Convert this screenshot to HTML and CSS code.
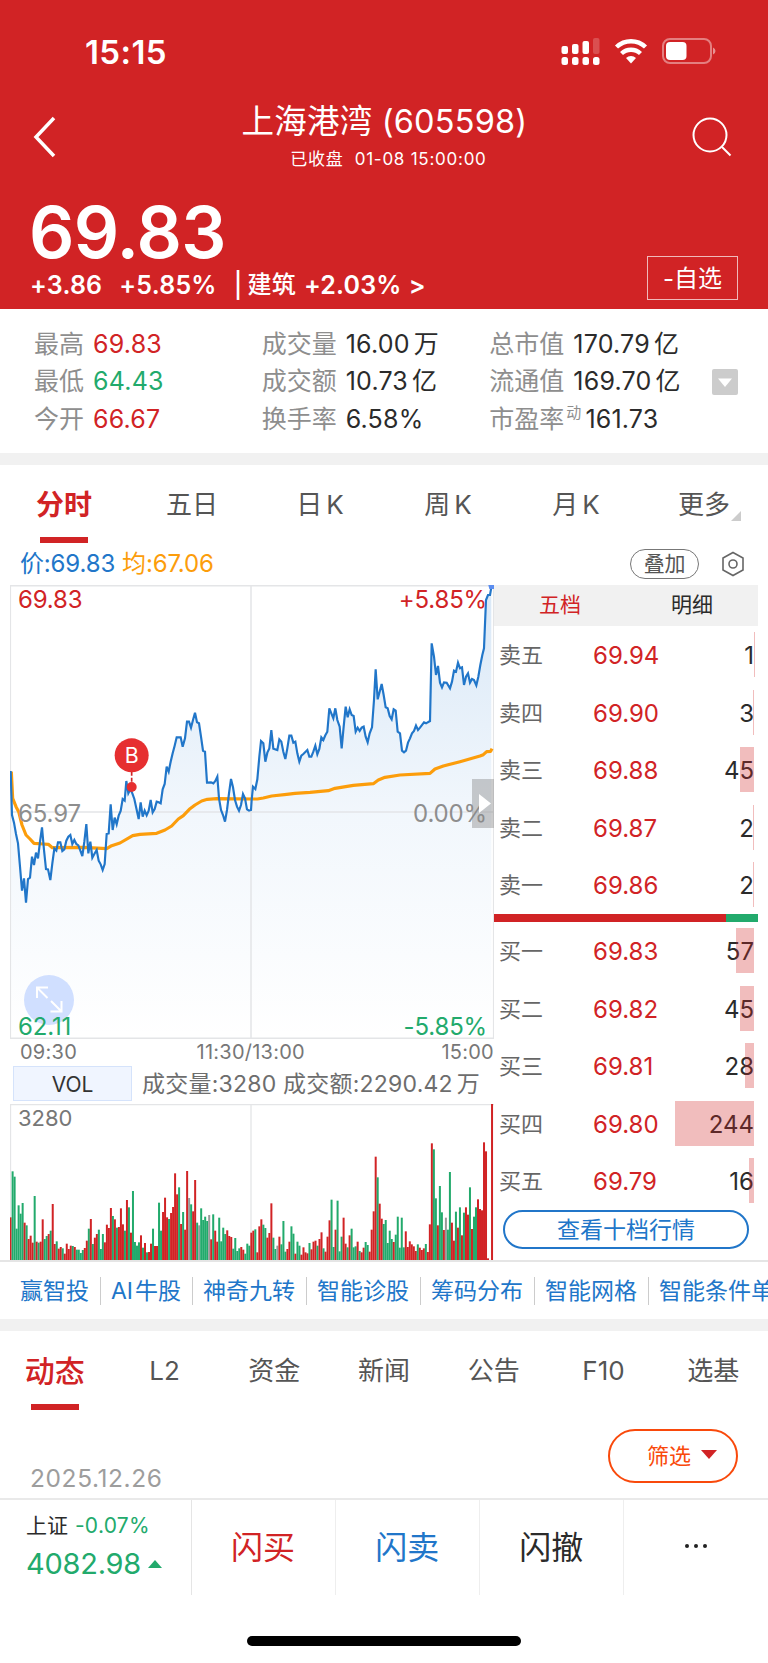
FILE: index.html
```html
<!DOCTYPE html>
<html lang="zh-CN">
<head>
    <meta charset="UTF-8">
    <meta name="viewport" content="width=device-width, initial-scale=1.0">
    <title>上海港湾 (605598)</title>
    <link rel="stylesheet" href="styles.css">
</head>
<body>
    <div class="header">
        <div class="status-bar">
            <span class="clock">15:15</span>
            <svg class="status-icons" width="156" height="30" viewBox="0 0 156 30">
                <g fill="#fff">
                    <rect x="1.500" y="10" width="6.500" height="8" rx="2"/>
                    <rect x="12" y="8" width="6.500" height="10" rx="2"/>
                    <rect x="22.500" y="5" width="6.500" height="13" rx="2"/>
                    <rect x="33" y="2" width="6.500" height="16" rx="2" opacity=".2"/>
                    <rect x="1.500" y="21" width="6.500" height="8" rx="2.500"/>
                    <rect x="12" y="21" width="6.500" height="8" rx="2.500"/>
                    <rect x="22.500" y="21" width="6.500" height="8" rx="2.500"/>
                    <rect x="33" y="21" width="6.500" height="8" rx="2.500"/>
                    <path d="M71 27.500l-5-5.500a7.500 7.500 0 0 1 10 0z"/>
                    <rect x="106" y="6" width="20.500" height="18" rx="4"/>
                    <path d="M153 11.500v7q2.500-1 2.500-3.500t-2.500-3.500z" opacity=".5"/>
                </g>
                <g fill="none" stroke="#fff" stroke-width="4.400">
                    <path d="M56.500 11a21 21 0 0 1 29 0"/>
                    <path d="M61.500 17.500a14 14 0 0 1 19 0"/>
                </g>
                <rect x="103" y="3" width="48" height="24" rx="7" fill="none" stroke="#fff" stroke-width="2" opacity=".42"/>
            </svg>
        </div>
        <div class="nav">
            <svg width="24" height="42" viewBox="0 0 24 42"><path d="M22 2L4 21l18 19" fill="none" stroke="#fff" stroke-width="3.500"/></svg>
            <div class="nav-title">
                <h1>上海港湾 (605598)</h1>
                <p>已收盘&nbsp; 01-08 15:00:00</p>
            </div>
            <svg width="42" height="42" viewBox="0 0 42 42" fill="none" stroke="#fff" stroke-width="2"><circle cx="19" cy="19" r="16.500"/><path d="M31 31l8.500 8.500"/></svg>
        </div>
        <div class="price">69.83</div>
        <div class="change-row">
            <div class="change"><span>+3.86</span><span>+5.85%</span><span>|</span><span>建筑</span><span>+2.03%</span><span>&gt;</span></div>
            <div class="fav">-自选</div>
        </div>
    </div>

    <div class="stats">
        <div class="stat-col">
            <div><label>最高</label><b class="red">69.83</b></div>
            <div><label>最低</label><b class="green">64.43</b></div>
            <div><label>今开</label><b class="red">66.67</b></div>
        </div>
        <div class="stat-col">
            <div><label>成交量</label><b>16.00<i>万</i></b></div>
            <div><label>成交额</label><b>10.73<i>亿</i></b></div>
            <div><label>换手率</label><b>6.58%</b></div>
        </div>
        <div class="stat-col">
            <div><label>总市值</label><b>170.79<i>亿</i></b></div>
            <div><label>流通值</label><b>169.70<i>亿</i></b></div>
            <div class="pe"><label>市盈率<small>动</small></label><b>161.73</b></div>
        </div>
        <svg width="26" height="26" viewBox="0 0 26 26"><rect width="26" height="26" rx="2" fill="#ccc"/><path d="M6 9.500h14l-7 8.500z" fill="#fff"/></svg>
    </div>

    <div class="tabs">
        <div class="tab active">分时</div>
        <div class="tab">五日</div>
        <div class="tab">日<i>K</i></div>
        <div class="tab">周<i>K</i></div>
        <div class="tab">月<i>K</i></div>
        <div class="tab more">更多</div>
    </div>

    <div class="legend">
        <span class="blue">价:69.83</span>
        <span class="orange">均:67.06</span>
        <span class="overlay-btn">叠加</span>
        <svg width="24" height="26" viewBox="0 0 24 26" fill="none" stroke="#666" stroke-width="1.600"><path d="M12 1.500l10 5.500v12l-10 5.500L2 19V7z"/><circle cx="12" cy="13" r="4"/></svg>
    </div>

    <div class="quote">
        <div class="charts">
            <div class="price-chart">
                <svg width="484" height="454" viewBox="30 15 1452 1362">
                    <defs>
                        <linearGradient id="fade" x1="0" y1="0" x2="0" y2="1">
                            <stop offset="0" stop-color="#1f77cf" stop-opacity=".17"/>
                            <stop offset=".5" stop-color="#1f77cf" stop-opacity=".06"/>
                            <stop offset="1" stop-color="#1f77cf" stop-opacity="0"/>
                        </linearGradient>
                    </defs>
                    <path id="area" fill="url(#fade)"/>
                    <path d="M31 17H1481V1375H31zM753 17V1375M31 696H1481" fill="none" stroke="#e4e5e7" stroke-width="4.500"/>
                    <polyline id="average" fill="none" stroke="#fc9d0b" stroke-width="9.500" stroke-linejoin="round"/>
                    <polyline id="line" fill="none" stroke="#2176c9" stroke-width="6.500"/>
                    <path d="M1465 15h17v12h-14z" fill="#5b8def"/>
                    <path d="M395 575v36" stroke="#d12325" stroke-width="5" stroke-dasharray="12 6"/>
                    <circle cx="395" cy="526" r="51" fill="#e62f30"/>
                    <circle cx="395" cy="621" r="15" fill="#e62f30"/>
                    <text x="395" y="549" class="marker">B</text>
                </svg>
                <svg class="expand" width="50" height="50" viewBox="0 0 50 50"><circle cx="25" cy="25" r="25" fill="#d0dfff"/><path d="M13 23V12.500h11M13.500 13l10 10M27 26l10 10M26.500 36.500H37.500V26" fill="none" stroke="#fff" stroke-width="2"/></svg>
                <span class="axis top left red">69.83</span>
                <span class="axis top right red">+5.85%</span>
                <span class="axis middle left">65.97</span>
                <span class="axis middle right">0.00%</span>
                <span class="axis bottom left green">62.11</span>
                <span class="axis bottom right green">-5.85%</span>
                <svg class="drawer" width="22" height="49" viewBox="0 0 22 49"><rect width="22" height="49" fill="#888" opacity=".43"/><path d="M7 15l12 9.500L7 34z" fill="#fff"/></svg>
            </div>
            <div class="times"><span>09:30</span><span>11:30/13:00</span><span>15:00</span></div>
            <div class="vol-head">
                <span class="vol-btn">VOL</span>
                <span class="vol-text">成交量:3280 成交额:2290.42<i>万</i></span>
            </div>
            <div class="vol-chart">
                <svg id="volume" width="484" height="157" viewBox="10 0 484 157"><path d="M10.500 157V.500H494M251 .500V157" fill="none" stroke="#e4e5e7" stroke-width="1.300"/></svg>
                <span class="vol-max">3280</span>
            </div>
        </div>
        <div class="book">
            <div class="book-tabs"><span class="red">五档</span><span>明细</span></div>
            <div class="side" id="asks"></div>
            <div class="ratio"><div></div></div>
            <div class="side" id="bids"></div>
            <div class="ten-level">查看十档行情</div>
        </div>
    </div>

    <div class="links">
        <span>赢智投</span>
        <span>AI<i>牛股</i></span>
        <span>神奇九转</span>
        <span>智能诊股</span>
        <span>筹码分布</span>
        <span>智能网格</span>
        <span>智能条件单</span>
    </div>

    <div class="tabs news-tabs">
        <div class="tab active">动态</div>
        <div class="tab">L2</div>
        <div class="tab">资金</div>
        <div class="tab">新闻</div>
        <div class="tab">公告</div>
        <div class="tab">F10</div>
        <div class="tab">选基</div>
    </div>

    <div class="feed">
        <span class="date">2025.12.26</span>
        <span class="filter">筛选<svg width="16" height="9" viewBox="0 0 16 9"><path d="M0 0h16L8 9z" fill="#d12325"/></svg></span>
    </div>

    <div class="bottom-bar">
        <div class="index">
            <div class="index-name">上证 <span class="green">-0.07%</span></div>
            <div class="index-value green">4082.98<svg width="14" height="8" viewBox="0 0 14 8"><path d="M0 8h14L7 0z" fill="#22aa6c"/></svg></div>
        </div>
        <div class="action red">闪买</div>
        <div class="action blue">闪卖</div>
        <div class="action">闪撤</div>
        <div class="action dots"><svg width="24" height="6" viewBox="0 0 24 6" fill="#222"><circle cx="3" cy="3" r="2"/><circle cx="12" cy="3" r="2"/><circle cx="21" cy="3" r="2"/></svg></div>
    </div>
    <div class="home-bar"></div>

    <script src="chart.js"></script>
</body>
</html>
```
FILE: styles.css
```css
* {
    box-sizing: border-box;
}
body {
    margin: 0;
    width: 768px;
    height: 1663px;
    overflow: hidden;
    font-family: Inter, "Noto Sans CJK SC", sans-serif;
    background: #fff;
    color: #2b2b2b;
}
h1, p {
    margin: 0;
    font-weight: 400;
}
i {
    font-style: normal;
    margin-left: 4px;
}
svg {
    display: block;
    flex: none;
}
.red { color: #d12325; }
.green { color: #22aa6c; }
.blue { color: #2176c9; }
.orange { color: #fc9d0b; }

/* header */
.header {
    height: 309px;
    background: #d12325;
    color: #fff;
}
.status-bar {
    display: flex;
    justify-content: space-between;
    height: 105px;
    padding: 36px 52px 0 85px;
}
.clock {
    font-size: 33px;
    line-height: 32px;
    font-weight: 600;
    letter-spacing: 0.4px;
}
.nav {
    display: flex;
    justify-content: space-between;
    height: 95px;
    padding: 0 35px 0 32px;
}
.nav > svg {
    margin-top: 11px;
}
.nav-title {
    margin-left: 22px;
    text-align: center;
}
.nav-title h1 {
    font-size: 32.5px;
    line-height: 34px;
    letter-spacing: 0.2px;
}
.nav-title p {
    margin-top: 10px;
    padding-left: 8px;
    font-size: 17px;
    line-height: 20px;
    letter-spacing: 0.75px;
}
.price {
    height: 56px;
    padding-left: 29px;
    font-size: 71px;
    line-height: 65px;
    font-weight: 600;
    letter-spacing: -0.7px;
}
.change-row {
    display: flex;
    justify-content: space-between;
    padding: 0 30px;
}
.change {
    display: flex;
    padding-top: 13px;
    font-size: 25px;
    line-height: 32px;
    font-weight: 600;
    letter-spacing: 0.2px;
}
.change span:nth-child(2) { margin-left: 17px; }
.change span:nth-child(3) { margin-left: 17px; font-weight: 500; }
.change span:nth-child(4) { margin-left: 5px; font-size: 24px; font-weight: 500; }
.change span:nth-child(5) { margin-left: 8px; }
.change span:nth-child(6) { margin-left: 7px; }
.fav {
    width: 91px;
    height: 44px;
    border: 1px solid #f0b9ba;
    font-size: 24px;
    line-height: 44px;
    text-align: center;
}

/* stats */
.stats {
    display: flex;
    align-items: center;
    height: 156px;
    padding: 2px 30px 0 34px;
    border-bottom: 12px solid #f1f1f1;
    font-size: 25px;
}
.stat-col {
    width: 228px;
}
.stat-col:nth-child(3) {
    width: 223px;
}
.stat-col div {
    display: flex;
    height: 37.5px;
    line-height: 37.5px;
}
.stats label {
    margin-right: 9px;
    color: #8e8e8e;
    white-space: nowrap;
}
.stats b {
    font-weight: 400;
    letter-spacing: 0.2px;
    white-space: nowrap;
}
.stats small {
    position: relative;
    top: -10px;
    margin-left: 2px;
    font-size: 15px;
}
.stats .pe label {
    margin-right: 4px;
}

/* tabs */
.tabs {
    display: flex;
    height: 78px;
    font-size: 26px;
    line-height: 80px;
    color: #555;
}
.tab {
    position: relative;
    flex: 1;
    text-align: center;
    white-space: nowrap;
}
.tab.active {
    font-size: 28px;
    font-weight: 600;
    color: #d12325;
}
.tab.active::after {
    content: "";
    position: absolute;
    left: 50%;
    bottom: 0;
    width: 48px;
    height: 6px;
    margin-left: -24px;
    background: #d12325;
}
.more::after {
    content: "";
    position: absolute;
    right: 27px;
    bottom: 22px;
    border-left: 10px solid transparent;
    border-bottom: 10px solid #ccc;
}
.legend {
    display: flex;
    align-items: center;
    height: 42px;
    padding: 0 23px 0 20px;
    font-size: 24px;
    line-height: 36px;
    letter-spacing: -0.15px;
}
.legend .orange {
    margin-left: 7px;
}
.legend .overlay-btn {
    width: 69px;
    height: 30px;
    margin: 0 22px 0 auto;
    border: 1.5px solid #777;
    border-radius: 15px;
    font-size: 21px;
    line-height: 27px;
    text-align: center;
    color: #555;
}

/* charts */
.quote {
    display: flex;
    height: 677px;
    padding: 0 10px;
    border-bottom: 2px solid #e5e5e5;
}
.charts {
    width: 484px;
}
.price-chart, .vol-chart {
    position: relative;
}
.marker {
    font-size: 64px;
    text-anchor: middle;
    fill: #fff;
}
.axis {
    position: absolute;
    font-size: 24px;
    line-height: 28px;
    letter-spacing: -0.15px;
    color: #8e8e8e;
}
.axis.red { color: #d12325; }
.axis.green { color: #22aa6c; }
.left { left: 8px; }
.right { right: 7px; }
.top { top: 1px; }
.middle { top: 214.5px; }
.bottom { bottom: -2px; }
.expand {
    position: absolute;
    left: 14px;
    top: 390px;
}
.drawer {
    position: absolute;
    right: 0;
    top: 194px;
}
.times {
    display: flex;
    justify-content: space-between;
    height: 27px;
    padding: 0 0 0 10px;
    font-size: 20px;
    line-height: 26px;
    letter-spacing: 0.25px;
    color: #777;
}
.times span:nth-child(2) {
    margin-right: 17px;
}
.vol-head {
    display: flex;
    height: 38px;
    color: #6d6d6d;
}
.vol-btn {
    width: 119px;
    height: 35px;
    margin: 0 10px 0 3px;
    border: 1px solid #d5e3fb;
    background: #f0f5ff;
    font-size: 21px;
    line-height: 35px;
    text-align: center;
    color: #333;
}
.vol-text {
    font-size: 23px;
    line-height: 37px;
    letter-spacing: 0.22px;
    white-space: nowrap;
}
.vol-max {
    position: absolute;
    left: 8px;
    top: 0;
    font-size: 22px;
    line-height: 28px;
    color: #777;
}

/* order book */
.book {
    width: 264px;
}
.book-tabs {
    display: flex;
    height: 41px;
    background: #f1f1f1;
    font-size: 21px;
    line-height: 40px;
}
.book-tabs span {
    flex: 1;
    text-align: center;
}
.side {
    padding-top: 6px;
    height: 288px;
}
.level {
    position: relative;
    display: flex;
    height: 45px;
    margin-bottom: 12.6px;
    padding: 0 4px 0 5px;
    font-size: 24px;
    line-height: 47.5px;
}
.level-name {
    width: 94px;
    font-size: 22px;
    line-height: 46px;
    color: #666;
}
.level-size {
    margin-left: auto;
}
.level-bar {
    position: absolute;
    top: 0;
    right: 4px;
    height: 45px;
    background: rgba(209, 35, 37, 0.3);
}
.ratio {
    height: 8px;
    background: #22aa6c;
}
.ratio div {
    width: 232px;
    height: 8px;
    background: #d12325;
}
.ten-level {
    width: 246px;
    height: 39px;
    margin-left: 9px;
    border: 2px solid #2176c9;
    border-radius: 20px;
    font-size: 23px;
    line-height: 36px;
    text-align: center;
    color: #2176c9;
}

/* links */
.links {
    display: flex;
    align-items: center;
    height: 69px;
    padding-left: 10px;
    border-bottom: 12px solid #f1f1f1;
    font-size: 23px;
    line-height: 28px;
    color: #2176c9;
    white-space: nowrap;
}
.links span {
    padding: 0 11.3px 0 10px;
}
.links span + span {
    padding-left: 9.7px;
    border-left: 1px solid #ccc;
}
.links i {
    margin-left: 2px;
}

/* news */
.news-tabs {
    height: 79px;
}
.news-tabs .tab.active {
    font-size: 30px;
    font-weight: 500;
}
.feed {
    display: flex;
    justify-content: space-between;
    height: 88px;
    padding: 0 30px;
}
.date {
    padding-top: 54px;
    font-size: 24.5px;
    line-height: 28px;
    letter-spacing: 0.6px;
    color: #9d9d9d;
}
.filter {
    display: flex;
    align-items: center;
    width: 130px;
    height: 54px;
    margin-top: 19px;
    padding-left: 37px;
    border: 2px solid #f9490b;
    border-radius: 27px;
    font-size: 22px;
    line-height: 30px;
    color: #f9490b;
}
.filter svg {
    margin: -4px 0 0 10px;
}

/* bottom bar */
.bottom-bar {
    display: flex;
    height: 97px;
    border-top: 2px solid #e9e9e9;
}
.index {
    width: 192px;
    padding: 12px 0 0 26px;
    border-right: 1px solid #e5e5e5;
}
.index-name {
    font-size: 21px;
    line-height: 28px;
}
.index-name span {
    margin-left: 1px;
    letter-spacing: 0.3px;
}
.index-value {
    display: flex;
    align-items: center;
    margin-top: 6px;
    font-size: 29px;
    line-height: 36px;
    letter-spacing: -0.25px;
}
.index-value svg {
    margin-left: 7px;
}
.action {
    width: 144.5px;
    border-right: 1px solid #eee;
    font-size: 32px;
    line-height: 96px;
    text-align: center;
}
.dots {
    display: flex;
    justify-content: center;
    padding-top: 43px;
    border-right: 0;
}
.home-bar {
    width: 274px;
    height: 10px;
    margin: 41px auto 0;
    border-radius: 5px;
    background: #000;
}
```
FILE: chart.js
```js
const price = `32,573 36,705 42,728 48,762 54,790 60,860 66,932 72,895 78,968 84,897 90,893 96,830 102,855 108,818 114,835
120,785 126,742 132,810 138,867 144,868 151,900 157,850 163,806 169,812 174,787 181,787 187,813 193,808 199,782 205,770
211,765 217,792 223,780 229,792 235,796 241,812 247,828 253,785 259,732 265,820 271,785 277,833 283,822 290,810 296,842
302,853 308,870 314,852 320,762 326,760 332,673 338,750 344,713 350,733 356,707 362,693 368,657 374,662 379,603 385,640
391,628 397,640 403,657 409,685 416,717 422,667 428,710 434,692 440,706 446,692 452,660 458,697 464,687 470,665 476,667
482,670 488,628 494,612 500,560 506,575 512,545 518,520 524,497 530,472 542,472 548,500 555,475 561,425 567,425 573,443
579,420 585,398 591,427 597,430 603,470 609,512 615,515 621,608 633,607 640,610 646,603 652,590 657,655 663,690 669,705
675,725 681,690 687,640 693,597 699,622 705,660 711,680 717,692 723,675 729,642 735,655 741,688 747,692 753,690 755,660
759,620 766,627 772,598 778,530 783,483 790,490 796,545 802,518 808,505 814,450 820,506 832,510 838,478 844,485 850,515
856,537 862,505 868,467 874,467 880,488 886,485 892,520 898,545 904,527 910,522 922,510 928,530 934,530 940,515 946,497
952,523 958,507 964,472 970,480 976,466 982,455 988,385 994,400 1000,415 1006,385 1012,420 1019,440 1025,505 1031,440
1037,380 1043,412 1049,388 1055,405 1061,408 1067,455 1073,443 1079,453 1085,443 1091,440 1097,470 1103,487 1109,460
1116,442 1122,360 1127,268 1133,358 1139,335 1145,312 1151,345 1157,382 1163,385 1169,408 1175,418 1181,388 1187,392
1193,455 1200,460 1206,512 1212,517 1218,512 1224,488 1230,475 1236,460 1242,453 1248,437 1254,450 1260,443 1272,427
1278,430 1290,423 1295,190 1302,230 1308,285 1314,258 1320,308 1326,322 1332,307 1340,308 1350,325 1356,305 1362,272
1368,275 1374,248 1380,265 1386,262 1392,315 1398,290 1404,280 1410,308 1416,297 1422,300 1429,316 1435,290 1441,255
1447,225 1452,205 1458,60 1464,45 1470,45 1474,22`;

const average = `34,575 38,655 48,680 56,695 66,735 78,765 90,777 102,790 130,792 145,793 157,803 250,802 320,806 335,797
360,789 398,767 420,763 470,760 495,750 515,738 535,717 550,707 568,688 585,675 605,663 622,658 650,656 772,657 790,654
815,648 860,643 885,640 930,637 985,632 1005,625 1060,616 1120,611 1135,600 1155,592 1200,585 1290,580 1305,567 1330,558
1380,545 1440,528 1450,524 1460,515 1472,514 1476,506`;

// one bar per minute: r = up, g = down, n = flat
const volume = `r128 g266 g250 g94 g164 g139 g171 r112 g104 r63 r73 r52 g192 r55 g52 r55 r122 g63 g72 r78 g88 r168 r48 g56
r34 r39 g35 r19 r49 r33 r43 g42 r39 g31 g31 g21 g30 r36 r58 g94 r123 g48 r67 r78 g91 g33 g78 r53 r106 r96 r156 g132 r122
g97 r99 r155 r107 g88 r180 g158 r82 g207 g54 g43 g53 r74 g37 r51 g23 r24 r49 g94 r42 r42 g172 g88 r144 r187 r128 g123
r141 r159 r260 r197 g218 r108 g144 r91 r267 n186 g167 r146 r240 g112 n104 g155 g120 g130 g117 n135 r62 g137 r88 r55 g127
g56 g97 g78 r89 r72 r69 g34 g66 g27 g35 r39 r31 g19 g49 g43
r82 r88 g92 r23 r101 r122 g106 g96 r67 r81 r170 g67 g33 n43 r70 g47 g117 g25 r33 r55 g101 g79 r19 g55 g43 r16 r38 r23
r20 g51 r32 r55 r58 g43 r63 r83 g35 r25 r70 r119 g181 g39 r91 g178 g26 g70 r127 r49 g38 r74 g94 g38 g41 r55 g27 r23 r37
g54 g45 r25 r91 r146 r310 g248 r169 r124 g108 g120 g51 g88 g63 r54 g76 g130 g37 g127 g38 r86 r39 r56 r47 r41 r27 g47
r37 r30 r35 g48 r24 r107 r350 g332 g185 r104 g222 g143 r90 n127 g91 g264 r112 r58 g145 r97 g158 r74 g142 r158 r136 g218
r93 g130 g158 r182 r153 r149 r353 r326 r5 r0 r468`.split(/\s+/);

const colors = { r: '#d12325', g: '#22aa6c', n: '#999' };

document.getElementById('line').setAttribute('points', price);
document.getElementById('average').setAttribute('points', average);
document.getElementById('area').setAttribute('d', `M32,1375 L${price} L1474,1375 Z`);

let bars = '';
volume.forEach((v, i) => {
    const h = v.slice(1) / 3;
    bars += `<rect x="${(9.6 + i * 2.006).toFixed(2)}" y="${(156 - h).toFixed(2)}" width="2" height="${h.toFixed(2)}" fill="${colors[v[0]]}"/>`;
});
document.getElementById('volume').insertAdjacentHTML('beforeend', bars);

function renderSide(id, rows) {
    document.getElementById(id).innerHTML = rows.map(([name, value, size, width]) => `
        <div class="level">
            <span class="level-name">${name}</span>
            <span class="red">${value}</span>
            <span class="level-size">${size}</span>
            <div class="level-bar" style="width: ${width}px"></div>
        </div>`).join('');
}

renderSide('asks', [
    ['卖五', '69.94', 1, 0.5],
    ['卖四', '69.90', 3, 1],
    ['卖三', '69.88', 45, 14],
    ['卖二', '69.87', 2, 0.7],
    ['卖一', '69.86', 2, 0.7]
]);
renderSide('bids', [
    ['买一', '69.83', 57, 18],
    ['买二', '69.82', 45, 14],
    ['买三', '69.81', 28, 9],
    ['买四', '69.80', 244, 79],
    ['买五', '69.79', 16, 5]
]);
```
